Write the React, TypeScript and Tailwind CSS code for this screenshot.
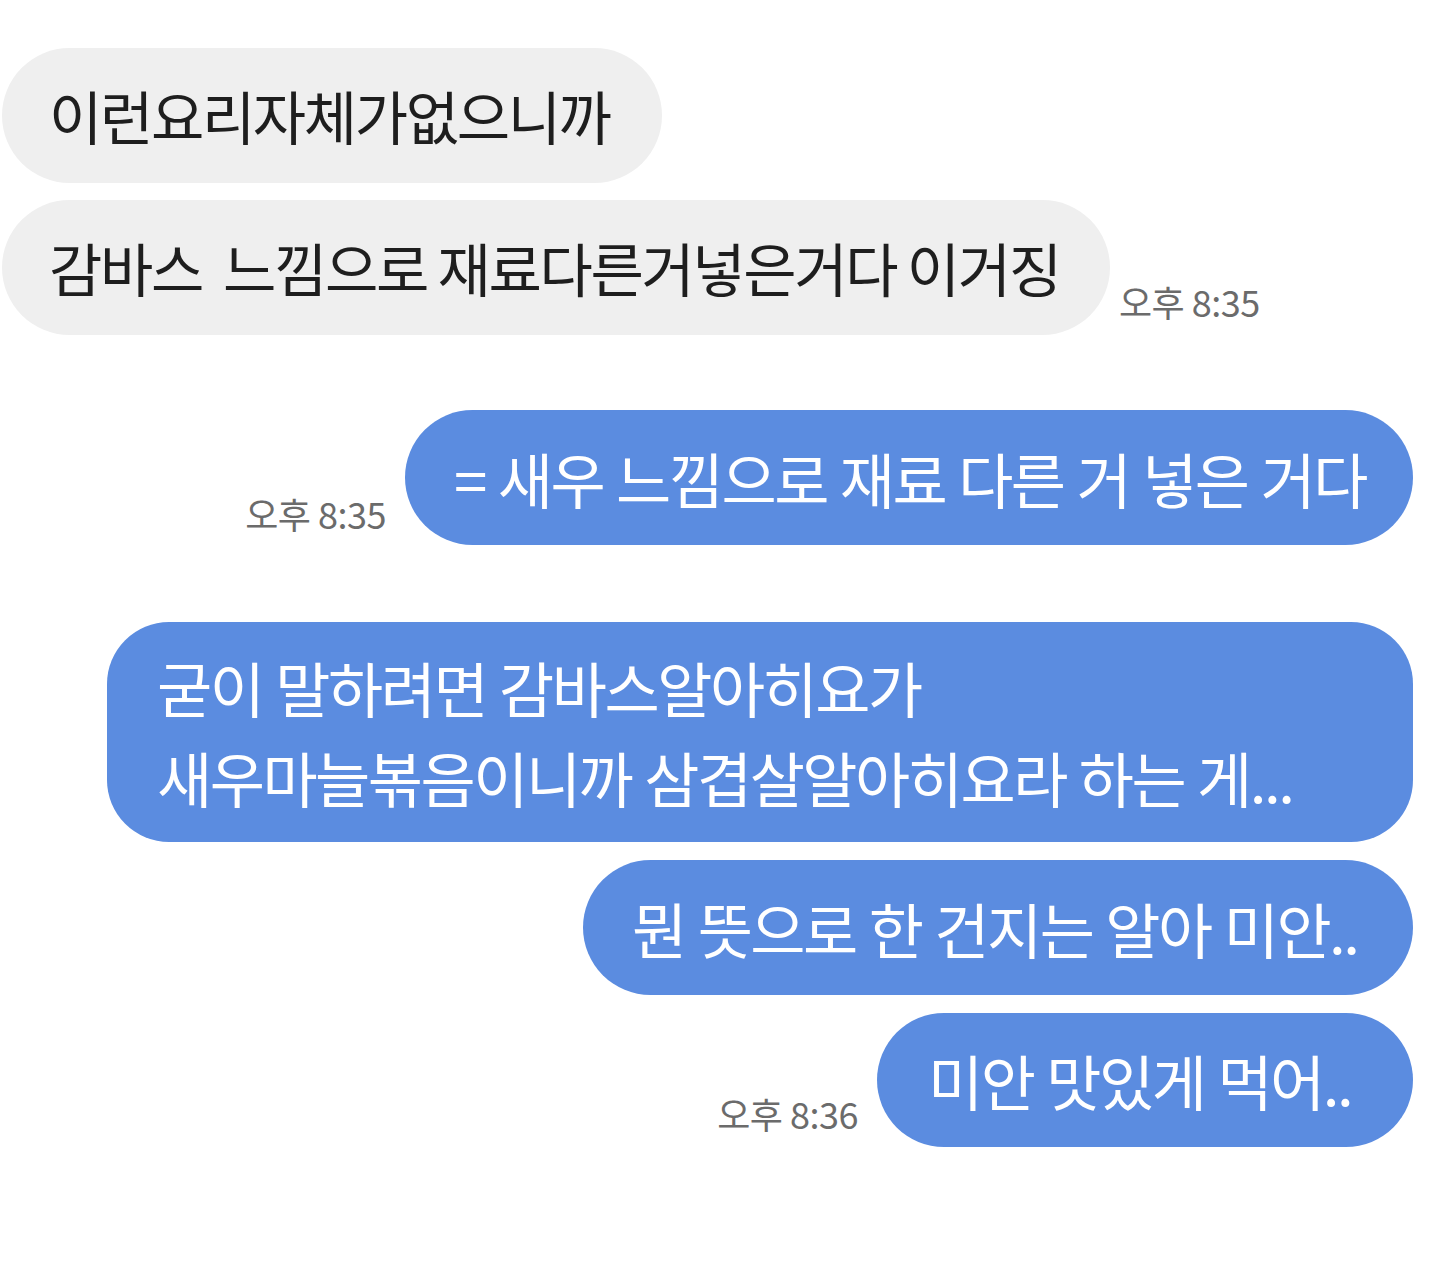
import React from "react";

function Time({ t, className = "" }: { t: string; className?: string }) {
  return (
    <span className={"whitespace-nowrap text-[36px] leading-none text-[#6b6b6b] tracking-[-0.5px] " + className}>
      {t}
    </span>
  );
}

export default function App() {
  return (
    <div className="min-h-[1283px] w-[1440px] bg-white pt-[48px] font-['Noto_Sans_CJK_KR','Noto_Sans',sans-serif]">
      <div className="flex flex-col">
        {/* Received 1 */}
        <div className="flex pl-[2px]">
          <div className="flex h-[135px] w-[660px] items-center whitespace-nowrap rounded-full bg-[#efefef] pl-[47px] text-[58px] font-normal tracking-[-2.4px] text-[#1e1e1e]">
            이런요리자체가없으니까
          </div>
        </div>

        {/* Received 2 */}
        <div className="mt-[17px] flex items-end pl-[2px]">
          <div className="flex h-[135px] w-[1108px] items-center whitespace-nowrap rounded-full bg-[#efefef] pl-[47px] text-[58px] font-normal tracking-[-2.4px] text-[#1e1e1e]">
            감바스&nbsp;&nbsp;느낌으로 재료다른거넣은거다 이거징
          </div>
          <Time t="오후 8:35" className="mb-[16px] ml-[9px]" />
        </div>

        {/* Sent 1 */}
        <div className="mt-[75px] flex items-end justify-end pr-[27px]">
          <Time t="오후 8:35" className="mb-[14px] mr-[19px]" />
          <div className="flex h-[135px] w-[1008px] items-center whitespace-nowrap rounded-full bg-[#5b8ce0] pl-[49px] text-[60px] font-normal tracking-[-2.5px] text-white [word-spacing:2px]">
            = 새우 느낌으로 재료 다른 거 넣은 거다
          </div>
        </div>

        {/* Sent 2 */}
        <div className="mt-[77px] flex justify-end pr-[27px]">
          <div className="flex h-[220px] w-[1306px] flex-col justify-center whitespace-nowrap rounded-[62px] bg-[#5b8ce0] pl-[50px] text-[60px] font-normal leading-[90px] tracking-[-2.5px] text-white [word-spacing:2px]">
            <span>굳이 말하려면 감바스알아히요가</span>
            <span>새우마늘볶음이니까 삼겹살알아히요라 하는 게...</span>
          </div>
        </div>

        {/* Sent 3 */}
        <div className="mt-[18px] flex justify-end pr-[27px]">
          <div className="flex h-[135px] w-[830px] items-center whitespace-nowrap rounded-full bg-[#5b8ce0] pl-[49px] text-[60px] font-normal tracking-[-2.5px] text-white [word-spacing:2px]">
            뭔 뜻으로 한 건지는 알아 미안..
          </div>
        </div>

        {/* Sent 4 */}
        <div className="mt-[18px] flex items-end justify-end pr-[27px]">
          <Time t="오후 8:36" className="mb-[16px] mr-[19px]" />
          <div className="flex h-[134px] w-[536px] items-center whitespace-nowrap rounded-full bg-[#5b8ce0] pl-[51px] text-[60px] font-normal tracking-[-2.5px] text-white [word-spacing:2px]">
            미안 맛있게 먹어..
          </div>
        </div>
      </div>
    </div>
  );
}
